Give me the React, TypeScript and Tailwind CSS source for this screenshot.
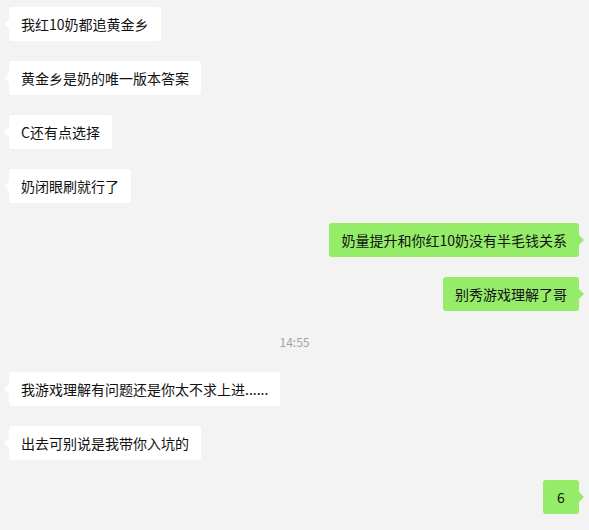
import React from "react";

type Msg = { side: "l" | "r"; text: string } | { side: "t"; text: string };

const msgs: Msg[] = [
  { side: "l", text: "我红10奶都追黄金乡" },
  { side: "l", text: "黄金乡是奶的唯一版本答案" },
  { side: "l", text: "C还有点选择" },
  { side: "l", text: "奶闭眼刷就行了" },
  { side: "r", text: "奶量提升和你红10奶没有半毛钱关系" },
  { side: "r", text: "别秀游戏理解了哥" },
  { side: "t", text: "14:55" },
  { side: "l", text: "我游戏理解有问题还是你太不求上进......" },
  { side: "l", text: "出去可别说是我带你入坑的" },
  { side: "r", text: "6" },
];

function Bubble({ side, text }: { side: "l" | "r"; text: string }) {
  const left = side === "l";
  return (
    <div className={`flex ${left ? "justify-start pl-[9px]" : "justify-end pr-[10px]"} mb-[20px]`}>
      <div
        className={`relative h-[34px] min-w-[36px] rounded-[3px] px-[12px] flex items-center justify-center text-[14px] leading-[20px] text-[#111] whitespace-nowrap ${
          left ? "bg-white" : "bg-[#95ec69]"
        }`}
      >
        {left ? (
          <span className="absolute left-[-5px] top-[12px] w-0 h-0 border-y-[5px] border-y-transparent border-r-[5px] border-r-white" />
        ) : (
          <span className="absolute right-[-5px] top-[12px] w-0 h-0 border-y-[5px] border-y-transparent border-l-[5px] border-l-[#95ec69]" />
        )}
        {text}
      </div>
    </div>
  );
}

export default function App() {
  return (
    <div
      className="w-[589px] h-[530px] bg-[#f3f3f3] pt-[7px] overflow-hidden"
      style={{ fontFamily: '"Noto Sans CJK SC", "Noto Sans", sans-serif' }}
    >
      {msgs.map((m, i) =>
        m.side === "t" ? (
          <div key={i} className="flex justify-center text-[12px] leading-[16px] text-[#a3a3a3] mt-[23px] mb-[22px]">
            {m.text}
          </div>
        ) : (
          <Bubble key={i} side={m.side} text={m.text} />
        )
      )}
    </div>
  );
}
